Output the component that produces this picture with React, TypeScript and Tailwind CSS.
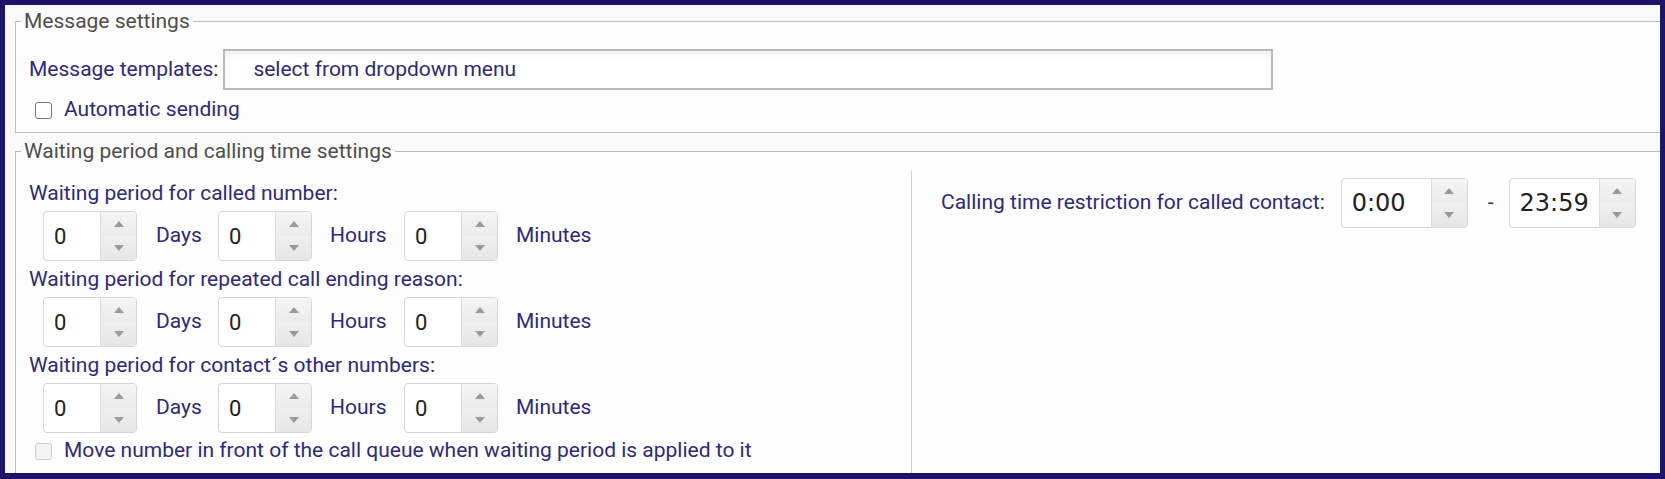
import React from 'react'

const font = { fontFamily: 'Roboto, "Noto Sans", sans-serif' }

function Arrow({ up }: { up?: boolean }) {
  return (
    <svg width="10" height="6" viewBox="0 0 10 6" className="block">
      {up ? <polygon points="5,0 10,6 0,6" fill="#9a9a9a" /> : <polygon points="0,0 10,0 5,6" fill="#9a9a9a" />}
    </svg>
  )
}

function Spinner() {
  return (
    <div className="flex h-full w-[36px] flex-col border-l border-[#dcdcdc]">
      <div className="flex flex-1 items-center justify-center bg-gradient-to-b from-[#f5f5f5] to-[#ebebeb]">
        <Arrow up />
      </div>
      <div className="flex flex-1 items-center justify-center bg-gradient-to-b from-[#efefef] to-[#e6e6e6]">
        <Arrow />
      </div>
    </div>
  )
}

function NumberBox({ value }: { value: string }) {
  return (
    <div className="flex h-[50px] w-[94px] overflow-hidden rounded-[4px] border border-[#d6d6d6] bg-white">
      <div className="flex flex-1 items-center pl-[10px] text-[22px] text-[#222]">{value}</div>
      <Spinner />
    </div>
  )
}

function TimeBox({ value }: { value: string }) {
  return (
    <div className="flex h-[50px] w-[127px] overflow-hidden rounded-[4px] border border-[#d6d6d6] bg-white">
      <div
        className="flex flex-1 items-center pl-[10px] text-[24px] text-[#222]"
        style={{ fontFamily: '"DejaVu Sans", sans-serif' }}
      >
        {value}
      </div>
      <Spinner />
    </div>
  )
}

function PeriodRow() {
  return (
    <div className="flex h-[50px] items-center pl-[27px]">
      <NumberBox value="0" />
      <span className="ml-[19px] w-[44px]">Days</span>
      <div className="ml-[18px]">
        <NumberBox value="0" />
      </div>
      <span className="ml-[18px] w-[56px]">Hours</span>
      <div className="ml-[18px]">
        <NumberBox value="0" />
      </div>
      <span className="ml-[18px]">Minutes</span>
    </div>
  )
}

function Check({ label, disabled }: { label: string; disabled?: boolean }) {
  return (
    <div className="flex h-[24px] items-center pl-[19px]">
      <span
        className={`h-[17px] w-[17px] rounded-[3px] border ${disabled ? 'border-[#cfcfcf] bg-[#f3f3f3]' : 'border-[#777] bg-white'}`}
      />
      <span className="ml-[12px]">{label}</span>
    </div>
  )
}

export default function App() {
  return (
    <div
      className="box-border flex h-[479px] w-full flex-col overflow-hidden border-[5px] border-b-[6px] border-[#1d1469] bg-[#f9f9f9] text-[21px] text-[#2e2a78]"
      style={font}
    >
      {/* Message settings */}
      <fieldset className="ml-[10px] mt-[4px] border border-r-0 border-[#bcbcbc] bg-[#fdfdfd] pb-[10px]">
        <legend className="ml-[5px] px-[3px] text-[21px] leading-[24px] text-[#4e4e4e]">Message settings</legend>
        <div className="flex items-center pl-[13px] pt-[16px]">
          <span>Message templates:</span>
          <div className="ml-[5px] flex h-[41px] w-[1050px] items-center border-2 border-[#bababa] bg-white pl-[28px] shadow-[inset_0_4px_4px_rgba(0,0,0,0.05)]">
            select from dropdown menu
          </div>
        </div>
        <div className="mt-[8px]">
          <Check label="Automatic sending" />
        </div>
      </fieldset>

      {/* Waiting period and calling time settings */}
      <fieldset className="ml-[10px] mt-[6px] flex-1 border border-b-0 border-r-0 border-[#bcbcbc] bg-[#fdfdfd]">
        <legend className="ml-[5px] px-[3px] text-[21px] leading-[24px] text-[#4e4e4e]">
          Waiting period and calling time settings
        </legend>
        <div className="mt-[8px] flex h-[320px]">
          <div className="flex w-[895px] flex-col gap-[6px] pt-[10px]">
            <div className="h-[24px] pl-[13px] leading-[24px]">Waiting period for called number:</div>
            <PeriodRow />
            <div className="h-[24px] pl-[13px] leading-[24px]">Waiting period for repeated call ending reason:</div>
            <PeriodRow />
            <div className="h-[24px] pl-[13px] leading-[24px]">Waiting period for contact´s other numbers:</div>
            <PeriodRow />
            <Check label="Move number in front of the call queue when waiting period is applied to it" disabled />
          </div>
          <div className="flex-1 border-l border-[#cfcfcf] pt-[7px]">
            <div className="flex h-[50px] items-center pl-[29px]">
              <span>Calling time restriction for called contact:</span>
              <div className="ml-[16px]">
                <TimeBox value="0:00" />
              </div>
              <span className="ml-[20px]">-</span>
              <div className="ml-[15px]">
                <TimeBox value="23:59" />
              </div>
            </div>
          </div>
        </div>
      </fieldset>
    </div>
  )
}
